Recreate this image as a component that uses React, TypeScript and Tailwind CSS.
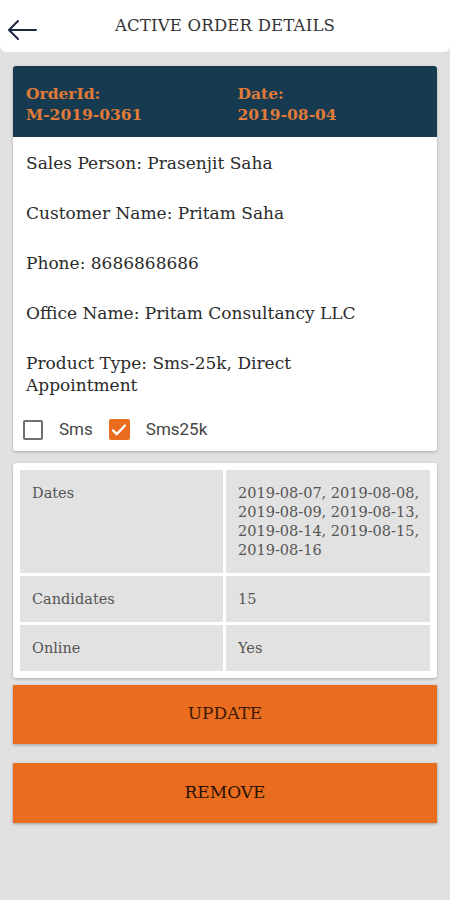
export default function App() {
  const serif = { fontFamily: '"DejaVu Serif", "Liberation Serif", serif' }
  const rows = [
    { label: "Dates", value: "2019-08-07, 2019-08-08, 2019-08-09, 2019-08-13, 2019-08-14, 2019-08-15, 2019-08-16" },
    { label: "Candidates", value: "15" },
    { label: "Online", value: "Yes" },
  ]
  const info = [
    "Sales Person: Prasenjit Saha",
    "Customer Name: Pritam Saha",
    "Phone: 8686868686",
    "Office Name: Pritam Consultancy LLC",
    "Product Type: Sms-25k, Direct Appointment",
  ]

  return (
    <div className="min-h-[900px] w-[450px] bg-[#e1e1e1]" style={serif}>
      {/* top bar */}
      <div className="relative flex h-[52px] items-center justify-center rounded-b-md bg-white">
        <svg className="absolute left-[7px] top-[18px]" width="30" height="24" viewBox="0 0 30 24" fill="none">
          <path d="M29 12H2M11 3L2 12l9 9" stroke="#1c2a3f" strokeWidth="2" strokeLinecap="round" strokeLinejoin="round" />
        </svg>
        <span className="text-[16.5px] text-[#333] tracking-[0.2px]">ACTIVE ORDER DETAILS</span>
      </div>

      <div className="flex flex-col px-[13px] pt-[14px]">
        {/* order card */}
        <div className="overflow-hidden rounded-[3px] bg-white shadow-[0_1px_3px_rgba(0,0,0,0.25)]">
          <div className="grid grid-cols-2 bg-[#163a4f] pl-[13px] pt-[17px] pb-[12px] text-[15.5px] font-bold leading-[21px] text-[#e07b39]">
            <div>
              <div>OrderId:</div>
              <div>M-2019-0361</div>
            </div>
            <div className="pl-[6px]">
              <div>Date:</div>
              <div>2019-08-04</div>
            </div>
          </div>
          <div className="flex flex-col gap-[28px] pl-[13px] pr-[60px] pt-[15px] text-[17px] leading-[22px] text-[#2b2b2b]">
            {info.map((t) => (
              <div key={t}>{t}</div>
            ))}
          </div>
          <div
            className="flex items-center pl-[10px] pt-[21px] pb-[8px] text-[17px] text-[#444]"
            style={{ fontFamily: 'Roboto, "Liberation Sans", sans-serif' }}
          >
            <span className="h-[20px] w-[20px] rounded-[2px] border-2 border-[#6f6f6f]" />
            <span className="ml-[16px]">Sms</span>
            <span className="ml-[16px] flex h-[21px] w-[21px] items-center justify-center rounded-[2px] bg-[#ea6c1f]">
              <svg width="18" height="18" viewBox="0 0 24 24" fill="none">
                <path d="M4 12.5l5 5L20 6" stroke="#fff" strokeWidth="3" strokeLinecap="round" strokeLinejoin="round" />
              </svg>
            </span>
            <span className="ml-[16px]">Sms25k</span>
          </div>
        </div>

        {/* table card */}
        <div className="mt-[12px] rounded-[3px] bg-white p-[7px] shadow-[0_1px_3px_rgba(0,0,0,0.25)]">
          <div className="grid grid-cols-[203px_1fr] gap-[3px] text-[14.5px] leading-[19px] text-[#555]">
            {rows.map((r) => (
              <div key={r.label} className="contents">
                <div className="bg-[#e2e2e2] px-[12px] pt-[14px] pb-[13px]">{r.label}</div>
                <div className="bg-[#e2e2e2] pl-[12px] pr-[6px] pt-[14px] pb-[13px]">{r.value}</div>
              </div>
            ))}
          </div>
        </div>

        {/* buttons */}
        <button className="mt-[7px] h-[59px] w-full bg-[#ea6d1f] text-[17px] text-[#3b1a05] shadow-[0_1px_3px_rgba(0,0,0,0.3)]">
          UPDATE
        </button>
        <button className="mt-[19px] h-[60px] w-full bg-[#ea6d1f] text-[17px] text-[#2a1204] shadow-[0_1px_3px_rgba(0,0,0,0.3)]">
          REMOVE
        </button>
      </div>
    </div>
  )
}
